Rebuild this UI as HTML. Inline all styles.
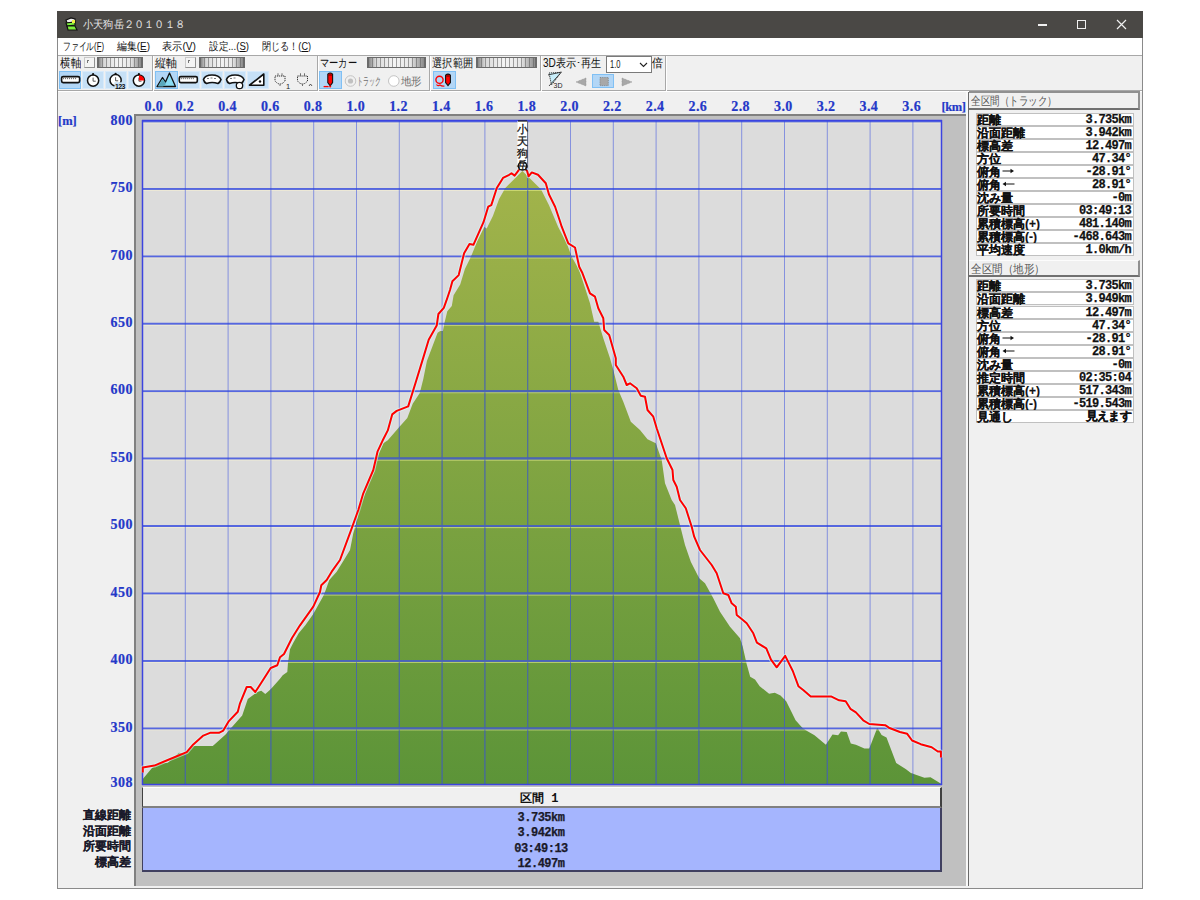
<!DOCTYPE html>
<html><head><meta charset="utf-8"><style>
html,body{margin:0;padding:0;}
body{width:1200px;height:900px;position:relative;overflow:hidden;background:#fff;font-family:"Liberation Sans",sans-serif;}
u{text-decoration:underline}
</style></head><body>
<div style="position:absolute;left:57px;top:11px;width:1086px;height:878px;background:#f0f0f0;box-sizing:border-box;border:1px solid #8a8a8a;border-top:none"></div>
<div style="position:absolute;left:57px;top:11px;width:1086px;height:27px;background:#4a4845"></div>
<div id="ttl" style="position:absolute;left:83px;top:17px;white-space:nowrap;transform-origin:0 0;transform:scaleX(0.9273);font-size:11px;line-height:14px;color:#e6e6e6">小天狗岳２０１０１８</div>
<svg style="position:absolute;left:63px;top:17px" width="16" height="15" viewBox="0 0 16 15"><path d="M3 3 L8 1 L12 2 L12 5 L4 6 Z" fill="#eee" stroke="#111" stroke-width="1.2"/><path d="M3 6 L12 5 L12 8 L4 9 Z" fill="#7ef03c" stroke="#111" stroke-width="1.2"/><path d="M4 9 L12 9 L14 13 L5 13 Z" fill="#7ef03c" stroke="#111" stroke-width="1.2"/><rect x="9" y="3" width="3" height="3" fill="#ee4"/></svg>
<div style="position:absolute;left:1038px;top:24px;width:9px;height:1.5px;background:#f0f0f0"></div>
<div style="position:absolute;left:1077px;top:20px;width:9px;height:9px;border:1.2px solid #f0f0f0;box-sizing:border-box"></div>
<svg style="position:absolute;left:1116px;top:19px" width="11" height="11"><path d="M1 1 L10 10 M10 1 L1 10" stroke="#f0f0f0" stroke-width="1.2"/></svg>
<div style="position:absolute;left:58px;top:38px;width:1084px;height:17px;background:#fff;border-bottom:1px solid #c8c8c8"></div>
<div id="mn0" style="position:absolute;left:63px;top:39px;white-space:nowrap;transform-origin:0 0;transform:scaleX(0.7059);font-size:11px;line-height:15px;color:#111">ファイル(<u>F</u>)</div>
<div id="mn1" style="position:absolute;left:117px;top:39px;white-space:nowrap;transform-origin:0 0;transform:scaleX(0.8995);font-size:11px;line-height:15px;color:#111">編集(<u>E</u>)</div>
<div id="mn2" style="position:absolute;left:162px;top:39px;white-space:nowrap;transform-origin:0 0;transform:scaleX(0.9267);font-size:11px;line-height:15px;color:#111">表示(<u>V</u>)</div>
<div id="mn3" style="position:absolute;left:209px;top:39px;white-space:nowrap;transform-origin:0 0;transform:scaleX(0.8722);font-size:11px;line-height:15px;color:#111">設定...(<u>S</u>)</div>
<div id="mn4" style="position:absolute;left:262px;top:39px;white-space:nowrap;transform-origin:0 0;transform:scaleX(0.8264);font-size:11px;line-height:15px;color:#111">閉じる！(<u>C</u>)</div>
<div style="position:absolute;left:58px;top:56px;width:1084px;height:36px;background:#f0f0f0"></div>
<div style="position:absolute;left:58px;top:90px;width:1084px;height:1px;background:#a8a8a8"></div>
<div style="position:absolute;left:58px;top:91px;width:1084px;height:1px;background:#fff"></div>
<div style="position:absolute;left:152px;top:56px;width:1px;height:35px;background:#a8a8a8"></div>
<div style="position:absolute;left:153px;top:56px;width:1px;height:35px;background:#fff"></div>
<div style="position:absolute;left:317px;top:56px;width:1px;height:35px;background:#a8a8a8"></div>
<div style="position:absolute;left:318px;top:56px;width:1px;height:35px;background:#fff"></div>
<div style="position:absolute;left:429px;top:56px;width:1px;height:35px;background:#a8a8a8"></div>
<div style="position:absolute;left:430px;top:56px;width:1px;height:35px;background:#fff"></div>
<div style="position:absolute;left:540px;top:56px;width:1px;height:35px;background:#a8a8a8"></div>
<div style="position:absolute;left:541px;top:56px;width:1px;height:35px;background:#fff"></div>
<div style="position:absolute;left:665px;top:56px;width:1px;height:35px;background:#a8a8a8"></div>
<div style="position:absolute;left:666px;top:56px;width:1px;height:35px;background:#fff"></div>
<div style="position:absolute;left:58px;top:55px;width:1084px;height:1px;background:#a8a8a8"></div>
<div id="tb0" style="position:absolute;left:60px;top:56px;white-space:nowrap;transform-origin:0 0;transform:scaleX(0.8750);font-size:12px;line-height:14px;color:#111">横軸</div>
<div id="tb1" style="position:absolute;left:155px;top:56px;white-space:nowrap;transform-origin:0 0;transform:scaleX(0.9167);font-size:12px;line-height:14px;color:#111">縦軸</div>
<div id="tb2" style="position:absolute;left:320px;top:56px;white-space:nowrap;transform-origin:0 0;transform:scaleX(0.7708);font-size:12px;line-height:14px;color:#111">マーカー</div>
<div id="tb3" style="position:absolute;left:432px;top:56px;white-space:nowrap;transform-origin:0 0;transform:scaleX(0.8542);font-size:12px;line-height:14px;color:#111">選択範囲</div>
<div id="tb4" style="position:absolute;left:543px;top:56px;white-space:nowrap;transform-origin:0 0;transform:scaleX(0.8364);font-size:12px;line-height:14px;color:#111">3D表示･再生</div>
<div id="tb5" style="position:absolute;left:652px;top:56px;white-space:nowrap;transform-origin:0 0;transform:scaleX(0.9167);font-size:12px;line-height:14px;color:#111">倍</div>
<div style="position:absolute;left:84px;top:57px;width:11px;height:11px;box-sizing:border-box;border:1px solid #c8c8c8;border-right-color:#909090;border-bottom-color:#909090;background:#f4f4f4"></div>
<div style="position:absolute;left:87px;top:60px;width:2px;height:1px;background:#777"></div>
<div style="position:absolute;left:87px;top:60px;width:1px;height:3px;background:#777"></div>
<div style="position:absolute;left:185px;top:57px;width:11px;height:11px;box-sizing:border-box;border:1px solid #c8c8c8;border-right-color:#909090;border-bottom-color:#909090;background:#f4f4f4"></div>
<div style="position:absolute;left:188px;top:60px;width:2px;height:1px;background:#777"></div>
<div style="position:absolute;left:188px;top:60px;width:1px;height:3px;background:#777"></div>
<div style="position:absolute;left:97px;top:57px;width:46px;height:11px;box-sizing:border-box;border:1px solid #6a6a6a;border-width:1px 2px;background:repeating-linear-gradient(90deg,rgba(0,0,0,0) 0,rgba(0,0,0,0) 3px,rgba(90,90,90,.55) 3px,rgba(90,90,90,.55) 4px),linear-gradient(90deg,#8a8a8a 0,#d8d8d8 12%,#f4f4f4 45%,#e8e8e8 75%,#8a8a8a 100%);"></div>
<div style="position:absolute;left:199px;top:57px;width:46px;height:11px;box-sizing:border-box;border:1px solid #6a6a6a;border-width:1px 2px;background:repeating-linear-gradient(90deg,rgba(0,0,0,0) 0,rgba(0,0,0,0) 3px,rgba(90,90,90,.55) 3px,rgba(90,90,90,.55) 4px),linear-gradient(90deg,#8a8a8a 0,#d8d8d8 12%,#f4f4f4 45%,#e8e8e8 75%,#8a8a8a 100%);"></div>
<div style="position:absolute;left:367px;top:57px;width:59px;height:11px;box-sizing:border-box;border:1px solid #6a6a6a;border-width:1px 2px;background:repeating-linear-gradient(90deg,rgba(0,0,0,0) 0,rgba(0,0,0,0) 3px,rgba(90,90,90,.55) 3px,rgba(90,90,90,.55) 4px),linear-gradient(90deg,#8a8a8a 0,#d8d8d8 12%,#f4f4f4 45%,#e8e8e8 75%,#8a8a8a 100%);"></div>
<div style="position:absolute;left:476px;top:57px;width:61px;height:11px;box-sizing:border-box;border:1px solid #6a6a6a;border-width:1px 2px;background:repeating-linear-gradient(90deg,rgba(0,0,0,0) 0,rgba(0,0,0,0) 3px,rgba(90,90,90,.55) 3px,rgba(90,90,90,.55) 4px),linear-gradient(90deg,#8a8a8a 0,#d8d8d8 12%,#f4f4f4 45%,#e8e8e8 75%,#8a8a8a 100%);"></div>
<div style="position:absolute;left:606px;top:56px;width:46px;height:17px;box-sizing:border-box;border:1px solid #7a7a7a;background:#fff"></div>
<div id="cmb" style="position:absolute;left:610px;top:58px;white-space:nowrap;transform-origin:0 0;transform:scaleX(0.6864);font-size:11px;line-height:13px;color:#111">1.0</div>
<svg style="position:absolute;left:639px;top:62px" width="10" height="7"><path d="M1 1 L4.5 4.5 L8 1" stroke="#222" fill="none" stroke-width="1.1"/></svg>
<div style="position:absolute;left:59.3px;top:70.6px;width:22.1px;height:18.3px;box-sizing:border-box;border:1px solid #80c0f4;background:#b2d6f6"></div>
<div style="position:absolute;left:82.2px;top:70.6px;width:21.7px;height:18.3px;box-sizing:border-box;border:1px solid #d8eafa;background:#c6e0f6"></div>
<div style="position:absolute;left:104.7px;top:70.6px;width:22.1px;height:18.3px;box-sizing:border-box;border:1px solid #d8eafa;background:#c6e0f6"></div>
<div style="position:absolute;left:127.7px;top:70.6px;width:23.3px;height:18.3px;box-sizing:border-box;border:1px solid #d8eafa;background:#c6e0f6"></div>
<div style="position:absolute;left:155.2px;top:70.6px;width:22.5px;height:18.3px;box-sizing:border-box;border:1px solid #80c0f4;background:#b2d6f6"></div>
<div style="position:absolute;left:178.6px;top:70.6px;width:21.2px;height:18.3px;box-sizing:border-box;border:1px solid #d8eafa;background:#c6e0f6"></div>
<div style="position:absolute;left:201px;top:70.6px;width:22.2px;height:18.3px;box-sizing:border-box;border:1px solid #d8eafa;background:#c6e0f6"></div>
<div style="position:absolute;left:224px;top:70.6px;width:21.7px;height:18.3px;box-sizing:border-box;border:1px solid #d8eafa;background:#c6e0f6"></div>
<div style="position:absolute;left:246.5px;top:70.6px;width:22.1px;height:18.3px;box-sizing:border-box;border:1px solid #d8eafa;background:#c6e0f6"></div>
<div style="position:absolute;left:319.4px;top:70.6px;width:22.5px;height:18.3px;box-sizing:border-box;border:1px solid #80c0f4;background:#b2d6f6"></div>
<div style="position:absolute;left:433px;top:70.6px;width:23px;height:18.3px;box-sizing:border-box;border:1px solid #80c0f4;background:#b2d6f6"></div>
<div style="position:absolute;left:592px;top:74.2px;width:22.2px;height:14.1px;box-sizing:border-box;border:1px solid #80c0f4;background:#b2d6f6"></div>
<svg style="position:absolute;left:0;top:0" width="700" height="95">
<rect x="61.6" y="76.6" width="18" height="6" rx="1.5" fill="#fff" stroke="#111" stroke-width="1.6"/><path d="M63.6 77.8 v1.4 M65.6 77.8 v1.4 M67.6 77.8 v1.4 M69.6 77.8 v1.4 M71.6 77.8 v1.4 M73.6 77.8 v1.4 M75.6 77.8 v1.4 " stroke="#444" stroke-width="0.8"/>
<circle cx="93.1" cy="80.6" r="5.6" fill="#fff" stroke="#111" stroke-width="1.5"/><circle cx="93.1" cy="74.19999999999999" r="1.1" fill="#111"/><path d="M93.1 77.6 V81.19999999999999 H95.69999999999999" stroke="#444" fill="none" stroke-width="0.9"/>
<circle cx="115.6" cy="80.2" r="5.6" fill="#fff" stroke="#111" stroke-width="1.5"/><circle cx="115.6" cy="73.8" r="1.1" fill="#111"/><path d="M115.6 77.2 V80.8 H118.19999999999999" stroke="#444" fill="none" stroke-width="0.9"/><rect x="114.5" y="82.3" width="11" height="6.5" fill="#c6e0f6"/><text x="115" y="88.6" font-size="7" font-family="Liberation Sans" font-weight="bold" fill="#111" textLength="10.5">123</text>
<circle cx="138.9" cy="80.6" r="5.6" fill="#fff" stroke="#111" stroke-width="1.5"/><circle cx="138.9" cy="74.19999999999999" r="1.1" fill="#111"/><path d="M138.9 77.6 V81.19999999999999 H141.5" stroke="#444" fill="none" stroke-width="0.9"/><path d="M139 75.2 A5.4 5.4 0 0 1 144.3 80.6 L139 80.6 Z" fill="#f00"/>
<path d="M157.5 86.5 L162.5 77.5 L165.5 82 L157.5 86.5 Z" fill="#4a9cb0"/><path d="M157 86.5 L162.5 77.5 L165.5 82 L169.5 73 L175.5 86.5 Z" fill="#8adcf4" stroke="#111" stroke-width="1.3" stroke-linejoin="round"/><path d="M158 86.5 L162.5 79 L166 84 L163 86.5 Z" fill="#5aa8bc"/>
<rect x="179.3" y="76.6" width="18" height="6" rx="1.5" fill="#fff" stroke="#111" stroke-width="1.6"/><path d="M181.3 77.8 v1.4 M183.3 77.8 v1.4 M185.3 77.8 v1.4 M187.3 77.8 v1.4 M189.3 77.8 v1.4 M191.3 77.8 v1.4 M193.3 77.8 v1.4 " stroke="#444" stroke-width="0.8"/>
<path d="M203.5 79.5 Q205 75 212 75 Q219 75 221 79.5 Q220 82.5 218 83.5 Q212 81.5 206.5 83.5 Q204 82.5 203.5 79.5 Z" fill="#fff" stroke="#111" stroke-width="1.6"/><path d="M207 78.5 h2 M210.5 78 h2 M214 78.5 h2" stroke="#555" stroke-width="0.8"/>
<path d="M226.5 79.5 Q228 75 235 75 Q242 75 244 79.5 Q243 82.5 241 83.5 Q235 81.5 229.5 83.5 Q227 82.5 226.5 79.5 Z" fill="#fff" stroke="#111" stroke-width="1.6"/><circle cx="239.5" cy="85.5" r="3.2" fill="#fff" stroke="#111" stroke-width="1.3"/><path d="M230 78.5 h2 M233.5 78 h2" stroke="#555" stroke-width="0.8"/>
<path d="M249.5 85.2 L263.8 74 L263.8 85.2 Z" fill="#fff" stroke="#111" stroke-width="1.6" stroke-linejoin="round"/><circle cx="260" cy="81.5" r="1.2" fill="#111"/>
<path d="M275 76 h10 v5 q-5 6 -10 0 Z M278 73.5 v2.5 M282 73.5 v2.5 M280 84.5 v2" fill="none" stroke="#333" stroke-width="1" stroke-dasharray="1.2 0.8"/><text x="286" y="89" font-size="7.5" font-family="Liberation Sans" fill="#222">1</text>
<path d="M297.5 76 h10 v5 q-5 6 -10 0 Z M300.5 73.5 v2.5 M304.5 73.5 v2.5 M302.5 84.5 v2" fill="none" stroke="#333" stroke-width="1" stroke-dasharray="1.2 0.8"/><path d="M309 86 l1.5 -2 l1.5 2" stroke="#333" fill="none" stroke-width="0.8"/>
<path d="M327.8 74.2 Q330.2 71.8 332.6 74.2 V82.5 L330.2 85.8 L327.8 82.5 Z" fill="#f00" stroke="#111" stroke-width="1.1"/><path d="M328.5 75 h3.4" stroke="#600" stroke-width="1"/><path d="M323.6 86.6 h5" stroke="#f00" stroke-width="1.3"/><circle cx="330.2" cy="86.6" r="1" fill="#f00"/>
<circle cx="350.5" cy="81" r="5.3" fill="#f0f0f0" stroke="#c4c4c4" stroke-width="1"/><circle cx="350.5" cy="81" r="2.6" fill="#c0c0c0"/>
<circle cx="393.8" cy="81" r="5.3" fill="#fff" stroke="#c4c4c4" stroke-width="1"/>
<circle cx="439.5" cy="79.8" r="3.6" fill="none" stroke="#f00" stroke-width="1.4"/><path d="M436.5 84.5 Q438 86.5 440 85 Q442 86.5 444.5 86" fill="none" stroke="#f00" stroke-width="1.2"/><path d="M445.6 75.2 Q448 73 450.4 75.2 V82.5 L448 85.5 L445.6 82.5 Z" fill="#f00" stroke="#111" stroke-width="1.1"/><path d="M446.3 76 h3.4" stroke="#600" stroke-width="1"/>
<path d="M549 73 L561 72.5 L551.5 85 Z" fill="#c8eefa" stroke="#333" stroke-width="1" stroke-dasharray="1.2 0.8"/><path d="M548 75 L561.5 72 M549 86 L561 72.5" stroke="#333" stroke-width="0.9"/><text x="553.5" y="88.4" font-size="7" font-family="Liberation Sans" fill="#222">3D</text>
<path d="M586 78 L576 82 L586 86 Z" fill="#a8a8a8" stroke="#909090" stroke-width="0.6" stroke-dasharray="1 0.6"/>
<rect x="600" y="77.5" width="8.3" height="8.1" fill="#a8a8a8" stroke="#808080" stroke-width="0.8" stroke-dasharray="1 0.8"/>
<path d="M622 78 L632 82 L622 86 Z" fill="#a8a8a8" stroke="#909090" stroke-width="0.6" stroke-dasharray="1 0.6"/>
</svg>
<div id="rd0" style="position:absolute;left:357px;top:75px;white-space:nowrap;transform-origin:0 0;transform:scaleX(0.5455);font-size:11px;line-height:13px;color:#6e6e6e">トラック</div>
<div id="rd1" style="position:absolute;left:401px;top:75px;white-space:nowrap;transform-origin:0 0;transform:scaleX(0.9545);font-size:11px;line-height:13px;color:#6e6e6e">地形</div>
<div style="position:absolute;left:138.9px;top:100.2px;width:30px;text-align:center;font-family:'Liberation Serif',serif;font-weight:bold;font-size:14px;line-height:14px;color:#2438c8;letter-spacing:0.4px;-webkit-text-stroke:0.2px #2438c8">0.0</div>
<div style="position:absolute;left:169.8px;top:100.2px;width:30px;text-align:center;font-family:'Liberation Serif',serif;font-weight:bold;font-size:14px;line-height:14px;color:#2438c8;letter-spacing:0.4px;-webkit-text-stroke:0.2px #2438c8">0.2</div>
<div style="position:absolute;left:212.5px;top:100.2px;width:30px;text-align:center;font-family:'Liberation Serif',serif;font-weight:bold;font-size:14px;line-height:14px;color:#2438c8;letter-spacing:0.4px;-webkit-text-stroke:0.2px #2438c8">0.4</div>
<div style="position:absolute;left:255.3px;top:100.2px;width:30px;text-align:center;font-family:'Liberation Serif',serif;font-weight:bold;font-size:14px;line-height:14px;color:#2438c8;letter-spacing:0.4px;-webkit-text-stroke:0.2px #2438c8">0.6</div>
<div style="position:absolute;left:298.0px;top:100.2px;width:30px;text-align:center;font-family:'Liberation Serif',serif;font-weight:bold;font-size:14px;line-height:14px;color:#2438c8;letter-spacing:0.4px;-webkit-text-stroke:0.2px #2438c8">0.8</div>
<div style="position:absolute;left:340.8px;top:100.2px;width:30px;text-align:center;font-family:'Liberation Serif',serif;font-weight:bold;font-size:14px;line-height:14px;color:#2438c8;letter-spacing:0.4px;-webkit-text-stroke:0.2px #2438c8">1.0</div>
<div style="position:absolute;left:383.5px;top:100.2px;width:30px;text-align:center;font-family:'Liberation Serif',serif;font-weight:bold;font-size:14px;line-height:14px;color:#2438c8;letter-spacing:0.4px;-webkit-text-stroke:0.2px #2438c8">1.2</div>
<div style="position:absolute;left:426.3px;top:100.2px;width:30px;text-align:center;font-family:'Liberation Serif',serif;font-weight:bold;font-size:14px;line-height:14px;color:#2438c8;letter-spacing:0.4px;-webkit-text-stroke:0.2px #2438c8">1.4</div>
<div style="position:absolute;left:469.1px;top:100.2px;width:30px;text-align:center;font-family:'Liberation Serif',serif;font-weight:bold;font-size:14px;line-height:14px;color:#2438c8;letter-spacing:0.4px;-webkit-text-stroke:0.2px #2438c8">1.6</div>
<div style="position:absolute;left:511.8px;top:100.2px;width:30px;text-align:center;font-family:'Liberation Serif',serif;font-weight:bold;font-size:14px;line-height:14px;color:#2438c8;letter-spacing:0.4px;-webkit-text-stroke:0.2px #2438c8">1.8</div>
<div style="position:absolute;left:554.6px;top:100.2px;width:30px;text-align:center;font-family:'Liberation Serif',serif;font-weight:bold;font-size:14px;line-height:14px;color:#2438c8;letter-spacing:0.4px;-webkit-text-stroke:0.2px #2438c8">2.0</div>
<div style="position:absolute;left:597.3px;top:100.2px;width:30px;text-align:center;font-family:'Liberation Serif',serif;font-weight:bold;font-size:14px;line-height:14px;color:#2438c8;letter-spacing:0.4px;-webkit-text-stroke:0.2px #2438c8">2.2</div>
<div style="position:absolute;left:640.1px;top:100.2px;width:30px;text-align:center;font-family:'Liberation Serif',serif;font-weight:bold;font-size:14px;line-height:14px;color:#2438c8;letter-spacing:0.4px;-webkit-text-stroke:0.2px #2438c8">2.4</div>
<div style="position:absolute;left:682.9px;top:100.2px;width:30px;text-align:center;font-family:'Liberation Serif',serif;font-weight:bold;font-size:14px;line-height:14px;color:#2438c8;letter-spacing:0.4px;-webkit-text-stroke:0.2px #2438c8">2.6</div>
<div style="position:absolute;left:725.6px;top:100.2px;width:30px;text-align:center;font-family:'Liberation Serif',serif;font-weight:bold;font-size:14px;line-height:14px;color:#2438c8;letter-spacing:0.4px;-webkit-text-stroke:0.2px #2438c8">2.8</div>
<div style="position:absolute;left:768.4px;top:100.2px;width:30px;text-align:center;font-family:'Liberation Serif',serif;font-weight:bold;font-size:14px;line-height:14px;color:#2438c8;letter-spacing:0.4px;-webkit-text-stroke:0.2px #2438c8">3.0</div>
<div style="position:absolute;left:811.1px;top:100.2px;width:30px;text-align:center;font-family:'Liberation Serif',serif;font-weight:bold;font-size:14px;line-height:14px;color:#2438c8;letter-spacing:0.4px;-webkit-text-stroke:0.2px #2438c8">3.2</div>
<div style="position:absolute;left:853.9px;top:100.2px;width:30px;text-align:center;font-family:'Liberation Serif',serif;font-weight:bold;font-size:14px;line-height:14px;color:#2438c8;letter-spacing:0.4px;-webkit-text-stroke:0.2px #2438c8">3.4</div>
<div style="position:absolute;left:896.7px;top:100.2px;width:30px;text-align:center;font-family:'Liberation Serif',serif;font-weight:bold;font-size:14px;line-height:14px;color:#2438c8;letter-spacing:0.4px;-webkit-text-stroke:0.2px #2438c8">3.6</div>
<div style="position:absolute;left:58px;top:114px;white-space:nowrap;font-family:'Liberation Serif',serif;font-weight:bold;font-size:12.5px;line-height:14px;color:#2438c8;letter-spacing:0px;-webkit-text-stroke:0.2px #2438c8">[m]</div>
<div style="position:absolute;left:92.8px;top:113.6px;width:40px;text-align:right;font-family:'Liberation Serif',serif;font-weight:bold;font-size:14px;line-height:14px;color:#2438c8;letter-spacing:0.4px;-webkit-text-stroke:0.2px #2438c8">800</div>
<div style="position:absolute;left:92.8px;top:181.0px;width:40px;text-align:right;font-family:'Liberation Serif',serif;font-weight:bold;font-size:14px;line-height:14px;color:#2438c8;letter-spacing:0.4px;-webkit-text-stroke:0.2px #2438c8">750</div>
<div style="position:absolute;left:92.8px;top:248.5px;width:40px;text-align:right;font-family:'Liberation Serif',serif;font-weight:bold;font-size:14px;line-height:14px;color:#2438c8;letter-spacing:0.4px;-webkit-text-stroke:0.2px #2438c8">700</div>
<div style="position:absolute;left:92.8px;top:315.9px;width:40px;text-align:right;font-family:'Liberation Serif',serif;font-weight:bold;font-size:14px;line-height:14px;color:#2438c8;letter-spacing:0.4px;-webkit-text-stroke:0.2px #2438c8">650</div>
<div style="position:absolute;left:92.8px;top:383.3px;width:40px;text-align:right;font-family:'Liberation Serif',serif;font-weight:bold;font-size:14px;line-height:14px;color:#2438c8;letter-spacing:0.4px;-webkit-text-stroke:0.2px #2438c8">600</div>
<div style="position:absolute;left:92.8px;top:450.8px;width:40px;text-align:right;font-family:'Liberation Serif',serif;font-weight:bold;font-size:14px;line-height:14px;color:#2438c8;letter-spacing:0.4px;-webkit-text-stroke:0.2px #2438c8">550</div>
<div style="position:absolute;left:92.8px;top:518.2px;width:40px;text-align:right;font-family:'Liberation Serif',serif;font-weight:bold;font-size:14px;line-height:14px;color:#2438c8;letter-spacing:0.4px;-webkit-text-stroke:0.2px #2438c8">500</div>
<div style="position:absolute;left:92.8px;top:585.6px;width:40px;text-align:right;font-family:'Liberation Serif',serif;font-weight:bold;font-size:14px;line-height:14px;color:#2438c8;letter-spacing:0.4px;-webkit-text-stroke:0.2px #2438c8">450</div>
<div style="position:absolute;left:92.8px;top:653.0px;width:40px;text-align:right;font-family:'Liberation Serif',serif;font-weight:bold;font-size:14px;line-height:14px;color:#2438c8;letter-spacing:0.4px;-webkit-text-stroke:0.2px #2438c8">400</div>
<div style="position:absolute;left:92.8px;top:720.5px;width:40px;text-align:right;font-family:'Liberation Serif',serif;font-weight:bold;font-size:14px;line-height:14px;color:#2438c8;letter-spacing:0.4px;-webkit-text-stroke:0.2px #2438c8">350</div>
<div style="position:absolute;left:92.8px;top:776px;width:40px;text-align:right;font-family:'Liberation Serif',serif;font-weight:bold;font-size:14px;line-height:14px;color:#2438c8;letter-spacing:0.4px;-webkit-text-stroke:0.2px #2438c8">308</div>
<div style="position:absolute;left:134px;top:114px;width:832px;height:772px;background:#c0c0c0;box-sizing:border-box;border-left:2px solid #808080;border-top:2px solid #808080"></div>
<div style="position:absolute;left:966px;top:92px;width:2px;height:794px;background:#f8f8f8"></div>
<div style="position:absolute;left:968px;top:92px;width:1px;height:794px;background:#6a6a6a"></div>
<div style="position:absolute;left:134px;top:886px;width:834px;height:2px;background:#f0f0f0"></div>
<div style="position:absolute;left:941.5px;top:99.5px;white-space:nowrap;font-family:'Liberation Serif',serif;font-weight:bold;font-size:12.5px;line-height:14px;color:#2438c8;letter-spacing:-0.4px;-webkit-text-stroke:0.2px #2438c8">[km]</div>
<svg style="position:absolute;left:0;top:0" width="1200" height="900">
<defs><clipPath id="gclip"><polygon points="142.5,785.0 142.8,778.9 152.2,767.8 162.2,763.3 167.8,762.8 178.9,752.8 185.6,753.9 193.3,746.1 212.8,746.1 225.6,734.4 232.2,726.7 242.2,715.6 247.8,698.9 255.6,693.3 257.3,692.0 261.3,690.7 265.3,694.0 270.7,689.3 280.0,678.7 282.7,675.3 287.3,672.0 288.0,662.7 290.0,649.3 293.3,642.7 298.7,633.3 305.3,625.3 313.3,614.0 317.3,606.7 324.0,594.7 329.3,580.0 336.7,571.7 345.0,558.3 350.0,550.0 353.3,533.3 355.8,525.0 360.0,506.7 368.3,485.0 374.2,471.7 377.5,456.7 383.3,443.3 387.8,440.2 399.3,426.9 407.3,418.0 412.7,403.8 419.8,393.1 423.3,378.9 426.9,361.1 437.6,332.7 440.2,330.9 442.9,330.9 444.7,322.0 447.3,311.3 451.8,306.0 453.6,295.3 460.2,284.4 464.9,268.9 471.1,256.4 477.3,240.9 484.3,226.9 486.7,228.4 492.9,216.0 499.1,198.9 505.3,188.0 513.1,180.2 519.3,174.0 522.4,170.9 527.1,175.6 533.3,181.8 541.1,189.5 548.9,205.1 558.2,226.9 566.7,243.3 571.7,256.7 579.2,270.0 590.0,303.3 594.2,321.7 598.3,321.7 603.3,338.3 610.0,358.3 613.3,370.0 618.3,390.0 623.3,401.7 630.8,421.7 640.0,430.0 647.5,439.2 655.8,443.3 661.7,460.0 665.0,483.3 671.7,500.0 675.0,505.0 680.8,528.3 685.0,545.0 690.8,561.7 699.2,578.3 705.0,583.3 713.3,598.3 720.0,611.7 730.0,626.7 740.0,638.3 742.7,646.5 746.5,663.5 750.2,676.7 755.0,679.5 759.7,686.2 769.1,693.7 774.8,692.8 780.5,695.6 786.2,701.3 795.6,720.2 803.2,728.7 814.5,735.3 825.9,744.8 832.5,734.4 838.1,735.3 841.0,731.5 846.7,732.0 850.8,743.4 855.9,744.8 864.4,748.5 869.3,748.5 877.3,727.7 881.6,735.0 886.5,737.5 896.2,763.1 906.0,769.2 910.9,772.9 924.4,777.8 930.5,777.2 941.5,783.9 941.5,785.0"/></clipPath><linearGradient id="gg" x1="0" y1="172" x2="0" y2="784" gradientUnits="userSpaceOnUse"><stop offset="0" stop-color="#a3b44b"/><stop offset="1" stop-color="#5c9438"/></linearGradient></defs>
<rect x="142" y="120" width="800" height="665" fill="#dcdcdc"/>
<polygon points="142.5,785.0 142.8,778.9 152.2,767.8 162.2,763.3 167.8,762.8 178.9,752.8 185.6,753.9 193.3,746.1 212.8,746.1 225.6,734.4 232.2,726.7 242.2,715.6 247.8,698.9 255.6,693.3 257.3,692.0 261.3,690.7 265.3,694.0 270.7,689.3 280.0,678.7 282.7,675.3 287.3,672.0 288.0,662.7 290.0,649.3 293.3,642.7 298.7,633.3 305.3,625.3 313.3,614.0 317.3,606.7 324.0,594.7 329.3,580.0 336.7,571.7 345.0,558.3 350.0,550.0 353.3,533.3 355.8,525.0 360.0,506.7 368.3,485.0 374.2,471.7 377.5,456.7 383.3,443.3 387.8,440.2 399.3,426.9 407.3,418.0 412.7,403.8 419.8,393.1 423.3,378.9 426.9,361.1 437.6,332.7 440.2,330.9 442.9,330.9 444.7,322.0 447.3,311.3 451.8,306.0 453.6,295.3 460.2,284.4 464.9,268.9 471.1,256.4 477.3,240.9 484.3,226.9 486.7,228.4 492.9,216.0 499.1,198.9 505.3,188.0 513.1,180.2 519.3,174.0 522.4,170.9 527.1,175.6 533.3,181.8 541.1,189.5 548.9,205.1 558.2,226.9 566.7,243.3 571.7,256.7 579.2,270.0 590.0,303.3 594.2,321.7 598.3,321.7 603.3,338.3 610.0,358.3 613.3,370.0 618.3,390.0 623.3,401.7 630.8,421.7 640.0,430.0 647.5,439.2 655.8,443.3 661.7,460.0 665.0,483.3 671.7,500.0 675.0,505.0 680.8,528.3 685.0,545.0 690.8,561.7 699.2,578.3 705.0,583.3 713.3,598.3 720.0,611.7 730.0,626.7 740.0,638.3 742.7,646.5 746.5,663.5 750.2,676.7 755.0,679.5 759.7,686.2 769.1,693.7 774.8,692.8 780.5,695.6 786.2,701.3 795.6,720.2 803.2,728.7 814.5,735.3 825.9,744.8 832.5,734.4 838.1,735.3 841.0,731.5 846.7,732.0 850.8,743.4 855.9,744.8 864.4,748.5 869.3,748.5 877.3,727.7 881.6,735.0 886.5,737.5 896.2,763.1 906.0,769.2 910.9,772.9 924.4,777.8 930.5,777.2 941.5,783.9 941.5,785.0" fill="url(#gg)"/>
<path d="M142 121.5 H942" stroke="#2a40e0" stroke-width="2" opacity="0.75"/><path d="M142 123.0 H942" stroke="#fff8d0" stroke-width="1" opacity="0.5"/><path d="M142 188.9 H942" stroke="#2a40e0" stroke-width="2" opacity="0.75"/><path d="M142 190.4 H942" stroke="#fff8d0" stroke-width="1" opacity="0.5"/><path d="M142 256.4 H942" stroke="#2a40e0" stroke-width="2" opacity="0.75"/><path d="M142 257.9 H942" stroke="#fff8d0" stroke-width="1" opacity="0.5"/><path d="M142 323.8 H942" stroke="#2a40e0" stroke-width="2" opacity="0.75"/><path d="M142 325.3 H942" stroke="#fff8d0" stroke-width="1" opacity="0.5"/><path d="M142 391.2 H942" stroke="#2a40e0" stroke-width="2" opacity="0.75"/><path d="M142 392.7 H942" stroke="#fff8d0" stroke-width="1" opacity="0.5"/><path d="M142 458.6 H942" stroke="#2a40e0" stroke-width="2" opacity="0.75"/><path d="M142 460.1 H942" stroke="#fff8d0" stroke-width="1" opacity="0.5"/><path d="M142 526.1 H942" stroke="#2a40e0" stroke-width="2" opacity="0.75"/><path d="M142 527.6 H942" stroke="#fff8d0" stroke-width="1" opacity="0.5"/><path d="M142 593.5 H942" stroke="#2a40e0" stroke-width="2" opacity="0.75"/><path d="M142 595.0 H942" stroke="#fff8d0" stroke-width="1" opacity="0.5"/><path d="M142 660.9 H942" stroke="#2a40e0" stroke-width="2" opacity="0.75"/><path d="M142 662.4 H942" stroke="#fff8d0" stroke-width="1" opacity="0.5"/><path d="M142 728.4 H942" stroke="#2a40e0" stroke-width="2" opacity="0.75"/><path d="M142 729.9 H942" stroke="#fff8d0" stroke-width="1" opacity="0.5"/>
<path d="M142.5 121 V785" stroke="#3048e0" stroke-width="1" opacity="0.5"/><path d="M185.3 121 V785" stroke="#3048e0" stroke-width="1" opacity="0.5"/><path d="M228.1 121 V785" stroke="#3048e0" stroke-width="1" opacity="0.5"/><path d="M270.9 121 V785" stroke="#3048e0" stroke-width="1" opacity="0.5"/><path d="M313.7 121 V785" stroke="#3048e0" stroke-width="1" opacity="0.5"/><path d="M356.5 121 V785" stroke="#3048e0" stroke-width="1" opacity="0.5"/><path d="M399.3 121 V785" stroke="#3048e0" stroke-width="1" opacity="0.5"/><path d="M442.1 121 V785" stroke="#3048e0" stroke-width="1" opacity="0.5"/><path d="M484.9 121 V785" stroke="#3048e0" stroke-width="1" opacity="0.5"/><path d="M527.7 121 V785" stroke="#3048e0" stroke-width="1" opacity="0.5"/><path d="M570.5 121 V785" stroke="#3048e0" stroke-width="1" opacity="0.5"/><path d="M613.3 121 V785" stroke="#3048e0" stroke-width="1" opacity="0.5"/><path d="M656.1 121 V785" stroke="#3048e0" stroke-width="1" opacity="0.5"/><path d="M698.9 121 V785" stroke="#3048e0" stroke-width="1" opacity="0.5"/><path d="M741.7 121 V785" stroke="#3048e0" stroke-width="1" opacity="0.5"/><path d="M784.5 121 V785" stroke="#3048e0" stroke-width="1" opacity="0.5"/><path d="M827.3 121 V785" stroke="#3048e0" stroke-width="1" opacity="0.5"/><path d="M870.1 121 V785" stroke="#3048e0" stroke-width="1" opacity="0.5"/><path d="M912.9 121 V785" stroke="#3048e0" stroke-width="1" opacity="0.5"/>
<g clip-path="url(#gclip)"><path d="M142.5 121 V785" stroke="#4a6aa8" stroke-width="1" opacity="0.8"/><path d="M185.3 121 V785" stroke="#4a6aa8" stroke-width="1" opacity="0.8"/><path d="M228.1 121 V785" stroke="#4a6aa8" stroke-width="1" opacity="0.8"/><path d="M270.9 121 V785" stroke="#4a6aa8" stroke-width="1" opacity="0.8"/><path d="M313.7 121 V785" stroke="#4a6aa8" stroke-width="1" opacity="0.8"/><path d="M356.5 121 V785" stroke="#4a6aa8" stroke-width="1" opacity="0.8"/><path d="M399.3 121 V785" stroke="#4a6aa8" stroke-width="1" opacity="0.8"/><path d="M442.1 121 V785" stroke="#4a6aa8" stroke-width="1" opacity="0.8"/><path d="M484.9 121 V785" stroke="#4a6aa8" stroke-width="1" opacity="0.8"/><path d="M527.7 121 V785" stroke="#4a6aa8" stroke-width="1" opacity="0.8"/><path d="M570.5 121 V785" stroke="#4a6aa8" stroke-width="1" opacity="0.8"/><path d="M613.3 121 V785" stroke="#4a6aa8" stroke-width="1" opacity="0.8"/><path d="M656.1 121 V785" stroke="#4a6aa8" stroke-width="1" opacity="0.8"/><path d="M698.9 121 V785" stroke="#4a6aa8" stroke-width="1" opacity="0.8"/><path d="M741.7 121 V785" stroke="#4a6aa8" stroke-width="1" opacity="0.8"/><path d="M784.5 121 V785" stroke="#4a6aa8" stroke-width="1" opacity="0.8"/><path d="M827.3 121 V785" stroke="#4a6aa8" stroke-width="1" opacity="0.8"/><path d="M870.1 121 V785" stroke="#4a6aa8" stroke-width="1" opacity="0.8"/><path d="M912.9 121 V785" stroke="#4a6aa8" stroke-width="1" opacity="0.8"/><path d="M142 121.5 H942" stroke="#4a64b8" stroke-width="2"/><path d="M142 123.0 H942" stroke="#c8e040" stroke-width="1" opacity="0.35"/><path d="M142 188.9 H942" stroke="#4a64b8" stroke-width="2"/><path d="M142 190.4 H942" stroke="#c8e040" stroke-width="1" opacity="0.35"/><path d="M142 256.4 H942" stroke="#4a64b8" stroke-width="2"/><path d="M142 257.9 H942" stroke="#c8e040" stroke-width="1" opacity="0.35"/><path d="M142 323.8 H942" stroke="#4a64b8" stroke-width="2"/><path d="M142 325.3 H942" stroke="#c8e040" stroke-width="1" opacity="0.35"/><path d="M142 391.2 H942" stroke="#4a64b8" stroke-width="2"/><path d="M142 392.7 H942" stroke="#c8e040" stroke-width="1" opacity="0.35"/><path d="M142 458.6 H942" stroke="#4a64b8" stroke-width="2"/><path d="M142 460.1 H942" stroke="#c8e040" stroke-width="1" opacity="0.35"/><path d="M142 526.1 H942" stroke="#4a64b8" stroke-width="2"/><path d="M142 527.6 H942" stroke="#c8e040" stroke-width="1" opacity="0.35"/><path d="M142 593.5 H942" stroke="#4a64b8" stroke-width="2"/><path d="M142 595.0 H942" stroke="#c8e040" stroke-width="1" opacity="0.35"/><path d="M142 660.9 H942" stroke="#4a64b8" stroke-width="2"/><path d="M142 662.4 H942" stroke="#c8e040" stroke-width="1" opacity="0.35"/><path d="M142 728.4 H942" stroke="#4a64b8" stroke-width="2"/><path d="M142 729.9 H942" stroke="#c8e040" stroke-width="1" opacity="0.35"/></g>
<path d="M142 120.5 H942 M142.5 120 V785 M941.5 120 V785 M142 784.5 H942" stroke="#3c44e0" stroke-width="1.5" fill="none"/>
<polyline points="142.8,772.5 142.8,767.5 154.4,765.6 167.8,760.0 186.7,752.2 193.3,744.4 203.3,735.6 210.0,732.8 218.9,732.8 223.3,730.6 228.9,721.1 237.8,711.7 240.0,703.3 246.7,687.0 250.7,687.0 255.3,692.0 261.3,682.7 270.7,668.0 277.3,665.3 280.0,657.3 284.0,654.0 292.0,638.0 300.0,625.3 313.3,606.7 320.0,592.0 321.3,585.3 326.7,580.0 331.7,571.7 340.0,560.0 351.7,528.3 358.3,510.0 363.3,493.3 373.3,470.0 377.5,451.7 382.5,440.8 387.8,430.4 392.2,414.4 396.7,410.9 408.2,406.4 416.2,380.7 423.3,357.6 428.7,339.8 436.7,325.6 438.4,314.0 443.8,307.8 446.4,300.7 450.0,290.0 452.4,281.3 458.7,275.1 464.1,253.3 469.5,244.0 473.4,244.8 483.5,222.2 488.2,206.7 491.3,205.1 496.8,188.0 503.0,177.9 509.2,174.8 511.5,173.2 514.6,175.6 519.3,169.3 522.4,166.2 527.1,170.9 528.6,176.3 531.8,172.4 538.0,174.8 545.8,183.3 548.9,194.2 555.1,206.7 559.8,220.7 561.7,226.7 568.3,243.3 575.0,247.5 579.2,266.7 582.5,273.3 590.0,293.3 595.0,296.7 598.3,308.3 603.3,318.3 604.2,330.0 609.2,335.0 615.8,358.3 615.8,365.0 623.3,376.7 626.7,385.0 630.0,383.3 636.7,388.3 640.8,395.8 645.0,396.7 647.5,410.0 653.3,416.7 656.7,428.3 666.7,458.3 672.5,470.0 673.3,480.0 676.7,486.7 680.0,500.0 685.8,508.3 691.7,526.7 694.2,536.7 700.0,550.0 711.7,565.0 716.7,573.3 723.3,593.3 728.3,595.0 731.7,603.3 735.8,606.7 736.7,615.0 740.8,618.3 746.7,623.3 753.3,633.3 756.9,642.7 766.3,648.4 771.0,659.7 776.7,667.3 785.2,655.9 792.8,671.0 798.4,686.2 803.2,690.0 810.7,696.6 831.5,696.6 839.1,700.3 845.7,701.3 850.4,708.8 855.9,712.4 863.2,720.3 869.3,724.0 885.2,725.2 888.9,727.7 899.9,732.0 907.2,733.8 912.1,740.5 920.7,744.2 931.7,747.2 937.8,751.5 940.9,751.5 940.9,757.6" fill="none" stroke="#d8ffff" stroke-width="4" stroke-linejoin="round" opacity="0.55"/>
<polyline points="142.8,772.5 142.8,767.5 154.4,765.6 167.8,760.0 186.7,752.2 193.3,744.4 203.3,735.6 210.0,732.8 218.9,732.8 223.3,730.6 228.9,721.1 237.8,711.7 240.0,703.3 246.7,687.0 250.7,687.0 255.3,692.0 261.3,682.7 270.7,668.0 277.3,665.3 280.0,657.3 284.0,654.0 292.0,638.0 300.0,625.3 313.3,606.7 320.0,592.0 321.3,585.3 326.7,580.0 331.7,571.7 340.0,560.0 351.7,528.3 358.3,510.0 363.3,493.3 373.3,470.0 377.5,451.7 382.5,440.8 387.8,430.4 392.2,414.4 396.7,410.9 408.2,406.4 416.2,380.7 423.3,357.6 428.7,339.8 436.7,325.6 438.4,314.0 443.8,307.8 446.4,300.7 450.0,290.0 452.4,281.3 458.7,275.1 464.1,253.3 469.5,244.0 473.4,244.8 483.5,222.2 488.2,206.7 491.3,205.1 496.8,188.0 503.0,177.9 509.2,174.8 511.5,173.2 514.6,175.6 519.3,169.3 522.4,166.2 527.1,170.9 528.6,176.3 531.8,172.4 538.0,174.8 545.8,183.3 548.9,194.2 555.1,206.7 559.8,220.7 561.7,226.7 568.3,243.3 575.0,247.5 579.2,266.7 582.5,273.3 590.0,293.3 595.0,296.7 598.3,308.3 603.3,318.3 604.2,330.0 609.2,335.0 615.8,358.3 615.8,365.0 623.3,376.7 626.7,385.0 630.0,383.3 636.7,388.3 640.8,395.8 645.0,396.7 647.5,410.0 653.3,416.7 656.7,428.3 666.7,458.3 672.5,470.0 673.3,480.0 676.7,486.7 680.0,500.0 685.8,508.3 691.7,526.7 694.2,536.7 700.0,550.0 711.7,565.0 716.7,573.3 723.3,593.3 728.3,595.0 731.7,603.3 735.8,606.7 736.7,615.0 740.8,618.3 746.7,623.3 753.3,633.3 756.9,642.7 766.3,648.4 771.0,659.7 776.7,667.3 785.2,655.9 792.8,671.0 798.4,686.2 803.2,690.0 810.7,696.6 831.5,696.6 839.1,700.3 845.7,701.3 850.4,708.8 855.9,712.4 863.2,720.3 869.3,724.0 885.2,725.2 888.9,727.7 899.9,732.0 907.2,733.8 912.1,740.5 920.7,744.2 931.7,747.2 937.8,751.5 940.9,751.5 940.9,757.6" fill="none" stroke="#ff0000" stroke-width="2.0" stroke-linejoin="round"/>
<path d="M517.5 121 H527.5 V165 Q527.5 171 522.5 171 Q517.5 171 517.5 165 Z" fill="#fff"/>
<path d="M518 121 H527" stroke="#111" stroke-width="1.2"/>
<path d="M527.5 121 V168" stroke="#111" stroke-width="0.8" opacity="0.6"/>
<circle cx="522.5" cy="166" r="4.2" fill="none" stroke="#111" stroke-width="1.3"/>
</svg>
<div style="position:absolute;left:516.5px;top:123px;width:12px;font-size:11px;line-height:12px;color:#111;text-align:center;-webkit-text-stroke:0.3px #111">小<br>天<br>狗<br>岳</div>
<div style="position:absolute;left:142px;top:787px;width:800px;height:21px;box-sizing:border-box;background:#f0f0f0;border-top:1px solid #fff;border-left:1px solid #404040;border-right:2px solid #404040;border-bottom:2px solid #808080"></div>
<div style="position:absolute;left:520px;top:791.5px;white-space:nowrap;font-family:'Liberation Mono',monospace;font-weight:bold;font-size:12px;line-height:14px;color:#111">区間 1</div>
<div style="position:absolute;left:142px;top:808px;width:800px;height:64px;box-sizing:border-box;background:#a5b5fe;border-left:1px solid #404060;border-right:2px solid #404060;border-bottom:2px solid #404060"></div>
<div style="position:absolute;left:441px;top:810.5px;width:200px;text-align:center;font-family:'Liberation Mono',monospace;font-weight:bold;font-size:12px;line-height:14px;color:#1a1a2a;letter-spacing:-0.5px;-webkit-text-stroke:0.25px #1a1a2a">3.735km</div>
<div style="position:absolute;left:441px;top:826.1px;width:200px;text-align:center;font-family:'Liberation Mono',monospace;font-weight:bold;font-size:12px;line-height:14px;color:#1a1a2a;letter-spacing:-0.5px;-webkit-text-stroke:0.25px #1a1a2a">3.942km</div>
<div style="position:absolute;left:441px;top:841.7px;width:200px;text-align:center;font-family:'Liberation Mono',monospace;font-weight:bold;font-size:12px;line-height:14px;color:#1a1a2a;letter-spacing:-0.5px;-webkit-text-stroke:0.25px #1a1a2a">03:49:13</div>
<div style="position:absolute;left:441px;top:857.3px;width:200px;text-align:center;font-family:'Liberation Mono',monospace;font-weight:bold;font-size:12px;line-height:14px;color:#1a1a2a;letter-spacing:-0.5px;-webkit-text-stroke:0.25px #1a1a2a">12.497m</div>
<div style="position:absolute;left:60px;top:808.0px;width:71px;text-align:right;font-weight:bold;font-size:12px;line-height:14px;color:#1a1a2a;-webkit-text-stroke:0.15px #1a1a2a">直線距離</div>
<div style="position:absolute;left:60px;top:823.6px;width:71px;text-align:right;font-weight:bold;font-size:12px;line-height:14px;color:#1a1a2a;-webkit-text-stroke:0.15px #1a1a2a">沿面距離</div>
<div style="position:absolute;left:60px;top:839.2px;width:71px;text-align:right;font-weight:bold;font-size:12px;line-height:14px;color:#1a1a2a;-webkit-text-stroke:0.15px #1a1a2a">所要時間</div>
<div style="position:absolute;left:60px;top:854.8px;width:71px;text-align:right;font-weight:bold;font-size:12px;line-height:14px;color:#1a1a2a;-webkit-text-stroke:0.15px #1a1a2a">標高差</div>
<div style="position:absolute;left:969px;top:91px;width:171px;height:18.5px;box-sizing:border-box;background:#f0f0f0;border-top:2px solid #909090;border-right:2px solid #909090;border-bottom:2px solid #707070"></div>
<div id="h0" style="position:absolute;left:971px;top:94px;white-space:nowrap;transform-origin:0 0;transform:scaleX(0.7963);font-size:12px;line-height:14px;color:#555">全区間（トラック）</div>
<div style="position:absolute;left:975.5px;top:112.5px;width:158px;height:13.1px;box-sizing:border-box;background:#fff;border:1px solid #c0c0c0"></div>
<div style="position:absolute;left:977px;top:113.5px;white-space:nowrap;font-weight:bold;font-size:12px;line-height:13px;color:#111;-webkit-text-stroke:0.15px #111">距離</div>
<div style="position:absolute;left:1000px;top:113.5px;width:131px;text-align:right;font-family:'Liberation Mono',monospace;font-weight:bold;font-size:12px;line-height:13px;color:#111;letter-spacing:-0.7px;-webkit-text-stroke:0.25px #111">3.735km</div>
<div style="position:absolute;left:975.5px;top:125.6px;width:158px;height:13.1px;box-sizing:border-box;background:#fff;border:1px solid #c0c0c0"></div>
<div style="position:absolute;left:977px;top:126.6px;white-space:nowrap;font-weight:bold;font-size:12px;line-height:13px;color:#111;-webkit-text-stroke:0.15px #111">沿面距離</div>
<div style="position:absolute;left:1000px;top:126.6px;width:131px;text-align:right;font-family:'Liberation Mono',monospace;font-weight:bold;font-size:12px;line-height:13px;color:#111;letter-spacing:-0.7px;-webkit-text-stroke:0.25px #111">3.942km</div>
<div style="position:absolute;left:975.5px;top:138.7px;width:158px;height:13.1px;box-sizing:border-box;background:#fff;border:1px solid #c0c0c0"></div>
<div style="position:absolute;left:977px;top:139.7px;white-space:nowrap;font-weight:bold;font-size:12px;line-height:13px;color:#111;-webkit-text-stroke:0.15px #111">標高差</div>
<div style="position:absolute;left:1000px;top:139.7px;width:131px;text-align:right;font-family:'Liberation Mono',monospace;font-weight:bold;font-size:12px;line-height:13px;color:#111;letter-spacing:-0.7px;-webkit-text-stroke:0.25px #111">12.497m</div>
<div style="position:absolute;left:975.5px;top:151.8px;width:158px;height:13.1px;box-sizing:border-box;background:#fff;border:1px solid #c0c0c0"></div>
<div style="position:absolute;left:977px;top:152.8px;white-space:nowrap;font-weight:bold;font-size:12px;line-height:13px;color:#111;-webkit-text-stroke:0.15px #111">方位</div>
<div style="position:absolute;left:1000px;top:152.8px;width:131px;text-align:right;font-family:'Liberation Mono',monospace;font-weight:bold;font-size:12px;line-height:13px;color:#111;letter-spacing:-0.7px;-webkit-text-stroke:0.25px #111">47.34° </div>
<div style="position:absolute;left:975.5px;top:164.9px;width:158px;height:13.1px;box-sizing:border-box;background:#fff;border:1px solid #c0c0c0"></div>
<div style="position:absolute;left:977px;top:165.9px;white-space:nowrap;font-weight:bold;font-size:12px;line-height:13px;color:#111;-webkit-text-stroke:0.15px #111">俯角<svg width="13" height="8" style="vertical-align:1px;margin-left:1px"><path d="M0.5 4 H9" stroke="#444" stroke-width="1.3"/><path d="M8.5 1.8 L12 4 L8.5 6.2 Z" fill="#111"/></svg></div>
<div style="position:absolute;left:1000px;top:165.9px;width:131px;text-align:right;font-family:'Liberation Mono',monospace;font-weight:bold;font-size:12px;line-height:13px;color:#111;letter-spacing:-0.7px;-webkit-text-stroke:0.25px #111">-28.91° </div>
<div style="position:absolute;left:975.5px;top:177.9px;width:158px;height:13.1px;box-sizing:border-box;background:#fff;border:1px solid #c0c0c0"></div>
<div style="position:absolute;left:977px;top:178.9px;white-space:nowrap;font-weight:bold;font-size:12px;line-height:13px;color:#111;-webkit-text-stroke:0.15px #111">俯角<svg width="13" height="8" style="vertical-align:1px;margin-left:1px"><path d="M3 4 H12.5" stroke="#444" stroke-width="1.3"/><path d="M4 1.8 L0.5 4 L4 6.2 Z" fill="#111"/></svg></div>
<div style="position:absolute;left:1000px;top:178.9px;width:131px;text-align:right;font-family:'Liberation Mono',monospace;font-weight:bold;font-size:12px;line-height:13px;color:#111;letter-spacing:-0.7px;-webkit-text-stroke:0.25px #111">28.91° </div>
<div style="position:absolute;left:975.5px;top:191.0px;width:158px;height:13.1px;box-sizing:border-box;background:#fff;border:1px solid #c0c0c0"></div>
<div style="position:absolute;left:977px;top:192.0px;white-space:nowrap;font-weight:bold;font-size:12px;line-height:13px;color:#111;-webkit-text-stroke:0.15px #111">沈み量</div>
<div style="position:absolute;left:1000px;top:192.0px;width:131px;text-align:right;font-family:'Liberation Mono',monospace;font-weight:bold;font-size:12px;line-height:13px;color:#111;letter-spacing:-0.7px;-webkit-text-stroke:0.25px #111">-0m</div>
<div style="position:absolute;left:975.5px;top:204.1px;width:158px;height:13.1px;box-sizing:border-box;background:#fff;border:1px solid #c0c0c0"></div>
<div style="position:absolute;left:977px;top:205.1px;white-space:nowrap;font-weight:bold;font-size:12px;line-height:13px;color:#111;-webkit-text-stroke:0.15px #111">所要時間</div>
<div style="position:absolute;left:1000px;top:205.1px;width:131px;text-align:right;font-family:'Liberation Mono',monospace;font-weight:bold;font-size:12px;line-height:13px;color:#111;letter-spacing:-0.7px;-webkit-text-stroke:0.25px #111">03:49:13</div>
<div style="position:absolute;left:975.5px;top:217.2px;width:158px;height:13.1px;box-sizing:border-box;background:#fff;border:1px solid #c0c0c0"></div>
<div style="position:absolute;left:977px;top:218.2px;white-space:nowrap;font-weight:bold;font-size:12px;line-height:13px;color:#111;-webkit-text-stroke:0.15px #111">累積標高(+)</div>
<div style="position:absolute;left:1000px;top:218.2px;width:131px;text-align:right;font-family:'Liberation Mono',monospace;font-weight:bold;font-size:12px;line-height:13px;color:#111;letter-spacing:-0.7px;-webkit-text-stroke:0.25px #111">481.140m</div>
<div style="position:absolute;left:975.5px;top:230.3px;width:158px;height:13.1px;box-sizing:border-box;background:#fff;border:1px solid #c0c0c0"></div>
<div style="position:absolute;left:977px;top:231.3px;white-space:nowrap;font-weight:bold;font-size:12px;line-height:13px;color:#111;-webkit-text-stroke:0.15px #111">累積標高(-)</div>
<div style="position:absolute;left:1000px;top:231.3px;width:131px;text-align:right;font-family:'Liberation Mono',monospace;font-weight:bold;font-size:12px;line-height:13px;color:#111;letter-spacing:-0.7px;-webkit-text-stroke:0.25px #111">-468.643m</div>
<div style="position:absolute;left:975.5px;top:243.4px;width:158px;height:13.1px;box-sizing:border-box;background:#fff;border:1px solid #c0c0c0"></div>
<div style="position:absolute;left:977px;top:244.4px;white-space:nowrap;font-weight:bold;font-size:12px;line-height:13px;color:#111;-webkit-text-stroke:0.15px #111">平均速度</div>
<div style="position:absolute;left:1000px;top:244.4px;width:131px;text-align:right;font-family:'Liberation Mono',monospace;font-weight:bold;font-size:12px;line-height:13px;color:#111;letter-spacing:-0.7px;-webkit-text-stroke:0.25px #111">1.0km/h</div>
<div style="position:absolute;left:969px;top:260px;width:171px;height:17px;box-sizing:border-box;background:#f0f0f0;border-top:1px solid #fcfcfc;border-right:2px solid #909090;border-bottom:2px solid #707070"></div>
<div id="h1" style="position:absolute;left:971px;top:262px;white-space:nowrap;transform-origin:0 0;transform:scaleX(0.8810);font-size:12px;line-height:14px;color:#555">全区間（地形）</div>
<div style="position:absolute;left:975.5px;top:279.3px;width:158px;height:13.1px;box-sizing:border-box;background:#fff;border:1px solid #c0c0c0"></div>
<div style="position:absolute;left:977px;top:280.3px;white-space:nowrap;font-weight:bold;font-size:12px;line-height:13px;color:#111;-webkit-text-stroke:0.15px #111">距離</div>
<div style="position:absolute;left:1000px;top:280.3px;width:131px;text-align:right;font-family:'Liberation Mono',monospace;font-weight:bold;font-size:12px;line-height:13px;color:#111;letter-spacing:-0.7px;-webkit-text-stroke:0.25px #111">3.735km</div>
<div style="position:absolute;left:975.5px;top:292.4px;width:158px;height:13.1px;box-sizing:border-box;background:#fff;border:1px solid #c0c0c0"></div>
<div style="position:absolute;left:977px;top:293.4px;white-space:nowrap;font-weight:bold;font-size:12px;line-height:13px;color:#111;-webkit-text-stroke:0.15px #111">沿面距離</div>
<div style="position:absolute;left:1000px;top:293.4px;width:131px;text-align:right;font-family:'Liberation Mono',monospace;font-weight:bold;font-size:12px;line-height:13px;color:#111;letter-spacing:-0.7px;-webkit-text-stroke:0.25px #111">3.949km</div>
<div style="position:absolute;left:975.5px;top:305.5px;width:158px;height:13.1px;box-sizing:border-box;background:#fff;border:1px solid #c0c0c0"></div>
<div style="position:absolute;left:977px;top:306.5px;white-space:nowrap;font-weight:bold;font-size:12px;line-height:13px;color:#111;-webkit-text-stroke:0.15px #111">標高差</div>
<div style="position:absolute;left:1000px;top:306.5px;width:131px;text-align:right;font-family:'Liberation Mono',monospace;font-weight:bold;font-size:12px;line-height:13px;color:#111;letter-spacing:-0.7px;-webkit-text-stroke:0.25px #111">12.497m</div>
<div style="position:absolute;left:975.5px;top:318.6px;width:158px;height:13.1px;box-sizing:border-box;background:#fff;border:1px solid #c0c0c0"></div>
<div style="position:absolute;left:977px;top:319.6px;white-space:nowrap;font-weight:bold;font-size:12px;line-height:13px;color:#111;-webkit-text-stroke:0.15px #111">方位</div>
<div style="position:absolute;left:1000px;top:319.6px;width:131px;text-align:right;font-family:'Liberation Mono',monospace;font-weight:bold;font-size:12px;line-height:13px;color:#111;letter-spacing:-0.7px;-webkit-text-stroke:0.25px #111">47.34° </div>
<div style="position:absolute;left:975.5px;top:331.7px;width:158px;height:13.1px;box-sizing:border-box;background:#fff;border:1px solid #c0c0c0"></div>
<div style="position:absolute;left:977px;top:332.7px;white-space:nowrap;font-weight:bold;font-size:12px;line-height:13px;color:#111;-webkit-text-stroke:0.15px #111">俯角<svg width="13" height="8" style="vertical-align:1px;margin-left:1px"><path d="M0.5 4 H9" stroke="#444" stroke-width="1.3"/><path d="M8.5 1.8 L12 4 L8.5 6.2 Z" fill="#111"/></svg></div>
<div style="position:absolute;left:1000px;top:332.7px;width:131px;text-align:right;font-family:'Liberation Mono',monospace;font-weight:bold;font-size:12px;line-height:13px;color:#111;letter-spacing:-0.7px;-webkit-text-stroke:0.25px #111">-28.91° </div>
<div style="position:absolute;left:975.5px;top:344.8px;width:158px;height:13.1px;box-sizing:border-box;background:#fff;border:1px solid #c0c0c0"></div>
<div style="position:absolute;left:977px;top:345.8px;white-space:nowrap;font-weight:bold;font-size:12px;line-height:13px;color:#111;-webkit-text-stroke:0.15px #111">俯角<svg width="13" height="8" style="vertical-align:1px;margin-left:1px"><path d="M3 4 H12.5" stroke="#444" stroke-width="1.3"/><path d="M4 1.8 L0.5 4 L4 6.2 Z" fill="#111"/></svg></div>
<div style="position:absolute;left:1000px;top:345.8px;width:131px;text-align:right;font-family:'Liberation Mono',monospace;font-weight:bold;font-size:12px;line-height:13px;color:#111;letter-spacing:-0.7px;-webkit-text-stroke:0.25px #111">28.91° </div>
<div style="position:absolute;left:975.5px;top:357.8px;width:158px;height:13.1px;box-sizing:border-box;background:#fff;border:1px solid #c0c0c0"></div>
<div style="position:absolute;left:977px;top:358.8px;white-space:nowrap;font-weight:bold;font-size:12px;line-height:13px;color:#111;-webkit-text-stroke:0.15px #111">沈み量</div>
<div style="position:absolute;left:1000px;top:358.8px;width:131px;text-align:right;font-family:'Liberation Mono',monospace;font-weight:bold;font-size:12px;line-height:13px;color:#111;letter-spacing:-0.7px;-webkit-text-stroke:0.25px #111">-0m</div>
<div style="position:absolute;left:975.5px;top:370.9px;width:158px;height:13.1px;box-sizing:border-box;background:#fff;border:1px solid #c0c0c0"></div>
<div style="position:absolute;left:977px;top:371.9px;white-space:nowrap;font-weight:bold;font-size:12px;line-height:13px;color:#111;-webkit-text-stroke:0.15px #111">推定時間</div>
<div style="position:absolute;left:1000px;top:371.9px;width:131px;text-align:right;font-family:'Liberation Mono',monospace;font-weight:bold;font-size:12px;line-height:13px;color:#111;letter-spacing:-0.7px;-webkit-text-stroke:0.25px #111">02:35:04</div>
<div style="position:absolute;left:975.5px;top:384.0px;width:158px;height:13.1px;box-sizing:border-box;background:#fff;border:1px solid #c0c0c0"></div>
<div style="position:absolute;left:977px;top:385.0px;white-space:nowrap;font-weight:bold;font-size:12px;line-height:13px;color:#111;-webkit-text-stroke:0.15px #111">累積標高(+)</div>
<div style="position:absolute;left:1000px;top:385.0px;width:131px;text-align:right;font-family:'Liberation Mono',monospace;font-weight:bold;font-size:12px;line-height:13px;color:#111;letter-spacing:-0.7px;-webkit-text-stroke:0.25px #111">517.343m</div>
<div style="position:absolute;left:975.5px;top:397.1px;width:158px;height:13.1px;box-sizing:border-box;background:#fff;border:1px solid #c0c0c0"></div>
<div style="position:absolute;left:977px;top:398.1px;white-space:nowrap;font-weight:bold;font-size:12px;line-height:13px;color:#111;-webkit-text-stroke:0.15px #111">累積標高(-)</div>
<div style="position:absolute;left:1000px;top:398.1px;width:131px;text-align:right;font-family:'Liberation Mono',monospace;font-weight:bold;font-size:12px;line-height:13px;color:#111;letter-spacing:-0.7px;-webkit-text-stroke:0.25px #111">-519.543m</div>
<div style="position:absolute;left:975.5px;top:410.2px;width:158px;height:13.1px;box-sizing:border-box;background:#fff;border:1px solid #c0c0c0"></div>
<div style="position:absolute;left:977px;top:411.2px;white-space:nowrap;font-weight:bold;font-size:12px;line-height:13px;color:#111;-webkit-text-stroke:0.15px #111">見通し</div>
<div style="position:absolute;left:1000px;top:411.2px;width:131px;text-align:right;font-family:'Liberation Mono',monospace;font-weight:bold;font-size:12px;line-height:13px;color:#111;letter-spacing:-0.7px;-webkit-text-stroke:0.25px #111">見えます</div>
</body></html>
